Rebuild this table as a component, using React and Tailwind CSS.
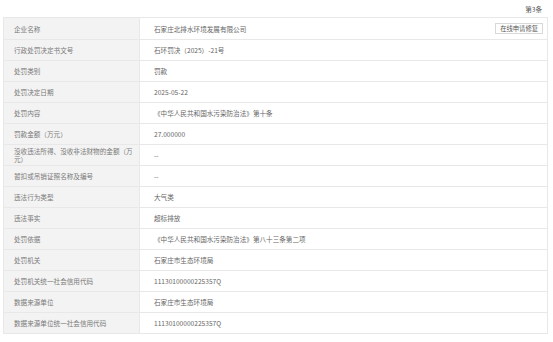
const rows = [
  ["企业名称", "石家庄北排水环境发展有限公司", true],
  ["行政处罚决定书文号", "石环罚决（2025）-21号"],
  ["处罚类别", "罚款"],
  ["处罚决定日期", "2025-05-22"],
  ["处罚内容", "《中华人民共和国水污染防治法》第十条"],
  ["罚款金额（万元）", "27.000000"],
  ["没收违法所得、没收非法财物的金额（万元）", "--"],
  ["暂扣或吊销证照名称及编号", "--"],
  ["违法行为类型", "大气类"],
  ["违法事实", "超标排放"],
  ["处罚依据", "《中华人民共和国水污染防治法》第八十三条第二项"],
  ["处罚机关", "石家庄市生态环境局"],
  ["处罚机关统一社会信用代码", "11130100000225357Q"],
  ["数据来源单位", "石家庄市生态环境局"],
  ["数据来源单位统一社会信用代码", "11130100000225357Q"],
];

export default function App() {
  return (
    <div
      className="w-[553px] h-[342px] bg-white text-[6.6px] leading-[8px]"
      style={{ fontFamily: '"Noto Sans CJK SC", "Liberation Sans", sans-serif' }}
    >
      <div className="h-[17px] flex items-center justify-end pr-[11px] text-[#555]">第3条</div>
      <div className="ml-[3px] w-[545px] border border-[#e8e8e8]">
        {rows.map(([label, value, btn], i) => (
          <div
            key={i}
            className={`grid grid-cols-[136px_1fr] h-[21px] ${i > 0 ? "border-t border-[#e8e8e8]" : ""}`}
          >
            <div className="bg-[#f3f3f3] border-r border-[#e8e8e8] flex items-center pl-[10px] pr-[6px] text-[#7a7a7a]">
              {label}
            </div>
            <div className="flex items-center justify-between pl-[14px] pr-[4px] text-[#666]">
              <span>{value}</span>
              {btn && (
                <span className="h-[11px] px-[4px] border border-[#d8d8d8] flex items-center text-[6.3px] text-[#555]">
                  在线申请修复
                </span>
              )}
            </div>
          </div>
        ))}
      </div>
    </div>
  );
}
